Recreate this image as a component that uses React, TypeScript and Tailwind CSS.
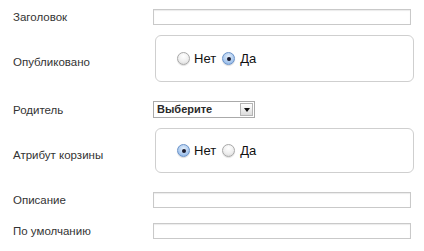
function TextInput() {
  return (
    <div className="h-[16px] w-[258px] border border-[#c9c9c9] bg-white shadow-[inset_0_1px_1px_rgba(0,0,0,0.08)]" />
  );
}

function Radio({ checked }: { checked?: boolean }) {
  if (checked) {
    return (
      <span className="flex h-[13px] w-[13px] shrink-0 items-center justify-center rounded-full border border-[#6b93c9] bg-[radial-gradient(circle_at_50%_35%,#e6f0fb_0%,#a9c8ee_60%,#7fa9e0_100%)] shadow-[0_1px_1px_rgba(0,0,0,0.15)]">
        <span className="h-[4px] w-[4px] rounded-full bg-[#1a1a2e]" />
      </span>
    );
  }
  return (
    <span className="block h-[13px] w-[13px] shrink-0 rounded-full border border-[#a8a8a8] bg-[radial-gradient(circle_at_50%_30%,#ffffff_0%,#eeeeee_55%,#d4d4d4_100%)] shadow-[0_1px_1px_rgba(0,0,0,0.12)]" />
  );
}

function YesNo({ value, height }: { value: "no" | "yes"; height: string }) {
  return (
    <div className={`ml-[2px] flex w-[259px] items-center rounded-[6px] border border-[#cfcfcf] pl-[21px] ${height}`}>
      <div className="flex items-center text-[13px] leading-[16px] text-[#111]">
        <Radio checked={value === "no"} />
        <span className="ml-[4px]">Нет</span>
        <span className="ml-[6px] flex">
          <Radio checked={value === "yes"} />
        </span>
        <span className="ml-[5px]">Да</span>
      </div>
    </div>
  );
}

function Select() {
  return (
    <div className="flex h-[17px] w-[102px] items-center border border-[#aaaaaa] bg-white">
      <span className="flex-1 pl-[3px] text-[11px] font-bold leading-none text-[#2a2a2a]">Выберите</span>
      <span className="mr-[1px] flex h-[13px] w-[13px] items-center justify-center border border-[#b5b5b5] bg-[linear-gradient(#ffffff,#dcdcdc)]">
        <span className="h-0 w-0 border-x-[3px] border-t-[4px] border-x-transparent border-t-[#111]" />
      </span>
    </div>
  );
}

function Row({ label, labelShift, children, className }: { label: string; labelShift?: string; children: React.ReactNode; className?: string }) {
  return (
    <div className={`flex items-center ${className ?? ""}`}>
      <div className={`w-[153px] pl-[13px] text-[11.5px] leading-[14px] text-[#333] ${labelShift ?? ""}`}>{label}</div>
      {children}
    </div>
  );
}

export default function App() {
  return (
    <div className="h-[251px] w-[424px] bg-white pt-[9px] font-['Liberation_Sans',Arial,sans-serif]">
      <Row label="Заголовок">
        <TextInput />
      </Row>
      <Row label="Опубликовано" labelShift="pt-[7px]" className="mt-[10px]">
        <YesNo value="yes" height="h-[47px]" />
      </Row>
      <Row label="Родитель" className="mt-[19px]">
        <Select />
      </Row>
      <Row label="Атрибут корзины" labelShift="pt-[9px]" className="mt-[10px]">
        <YesNo value="no" height="h-[45px]" />
      </Row>
      <Row label="Описание" className="mt-[19px]">
        <TextInput />
      </Row>
      <Row label="По умолчанию" className="mt-[15px]">
        <TextInput />
      </Row>
    </div>
  );
}
